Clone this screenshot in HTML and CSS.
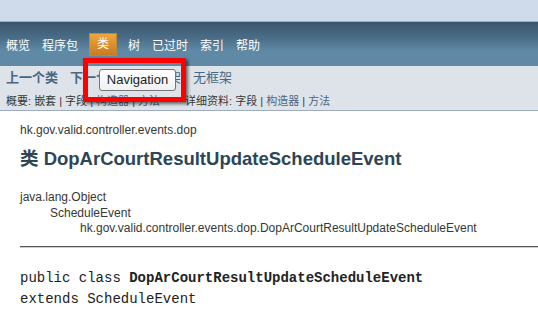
FILE: index.html
```html
<!DOCTYPE html>
<html lang="zh">
<head>
    <meta charset="UTF-8">
    <title>DopArCourtResultUpdateScheduleEvent</title>
    <link rel="stylesheet" href="styles.css">
</head>
<body>
    <div class="top-strip"></div>

    <div class="top-nav">
        <ul class="nav-list">
            <li>概览</li>
            <li>程序包</li>
            <li class="current">类</li>
            <li>树</li>
            <li>已过时</li>
            <li>索引</li>
            <li>帮助</li>
        </ul>
    </div>

    <div class="sub-nav">
        <div class="sub-row">
            <ul class="nav-list">
                <li>上一个类</li>
                <li>下一个类</li>
            </ul>
            <ul class="nav-list frames">
                <li>框架</li>
                <li>无框架</li>
            </ul>
        </div>
        <div class="sub-row small">
            <ul class="sub-list">
                <li>概要:&nbsp;</li>
                <li>嵌套&nbsp;|&nbsp;</li>
                <li>字段&nbsp;|&nbsp;</li>
                <li><a>构造器</a>&nbsp;|&nbsp;</li>
                <li><a>方法</a></li>
            </ul>
            <ul class="sub-list">
                <li>详细资料:&nbsp;</li>
                <li>字段&nbsp;|&nbsp;</li>
                <li><a>构造器</a>&nbsp;|&nbsp;</li>
                <li><a>方法</a></li>
            </ul>
        </div>

        <div class="highlight"></div>
        <div class="tooltip">Navigation</div>
    </div>

    <div class="content">
        <div class="package-name">hk.gov.valid.controller.events.dop</div>
        <h2 class="title">类 DopArCourtResultUpdateScheduleEvent</h2>

        <ul class="inheritance">
            <li>java.lang.Object</li>
            <li class="level-1">ScheduleEvent</li>
            <li class="level-2">hk.gov.valid.controller.events.dop.DopArCourtResultUpdateScheduleEvent</li>
        </ul>

        <hr>

        <pre class="signature">public class <b>DopArCourtResultUpdateScheduleEvent</b>
extends ScheduleEvent</pre>
    </div>
</body>
</html>
```

FILE: styles.css
```css
* {
    margin: 0;
    padding: 0;
    box-sizing: border-box;
}

body {
    background: #ffffff;
    color: #353833;
    font-family: "Liberation Sans", "Noto Sans CJK SC", sans-serif;
    font-size: 12px;
    overflow: hidden;
}

ul {
    list-style: none;
}

.top-strip {
    height: 22px;
    background: #cfdbeb;
    border-bottom: 1px solid #a3acb8;
}

.top-nav {
    height: 44px;
    background: linear-gradient(to bottom, #3a566d 0%, #4a6c86 35%, #5f89a5 65%, #5f89a5 100%);
    display: flex;
    align-items: center;
    color: #ffffff;
    font-size: 12px;
}

.nav-list {
    display: flex;
    align-items: center;
}

.nav-list li {
    padding: 0 6px;
}

.top-nav .current {
    margin: 0 5px;
    padding: 0 7px;
    height: 23px;
    line-height: 21px;
    background: linear-gradient(to bottom, #eea63c, #c97b22);
    border: 1px solid #b88a3a;
}

.sub-nav {
    position: relative;
    height: 45px;
    background: #dee3e9;
    border-bottom: 1px solid #9eadc0;
}

.sub-row {
    display: flex;
    height: 21px;
    align-items: center;
    color: #4a6782;
    font-size: 13px;
    font-weight: bold;
}

.sub-row .nav-list {
    margin-right: 21px;
}

.sub-row .frames {
    font-weight: normal;
}

.sub-row.small {
    margin-top: 2px;
    font-size: 11px;
    font-weight: normal;
    color: #353833;
}

.sub-list {
    display: flex;
    padding-left: 6px;
    margin-right: 19px;
}

.sub-list a {
    color: #4a6782;
}

.highlight {
    position: absolute;
    left: 83px;
    top: -8px;
    width: 103px;
    height: 44px;
    border: 5px solid #ff0000;
    box-shadow: 2px 2px 3px rgba(0, 0, 0, 0.55);
}

.tooltip {
    position: absolute;
    left: 99px;
    top: 3px;
    width: 77px;
    height: 22px;
    border: 1px solid #767676;
    border-radius: 3px;
    background: linear-gradient(to bottom, #ffffff, #eef0f3);
    color: #222222;
    font-size: 13px;
    line-height: 20px;
    text-align: center;
}

.content {
    padding: 12px 0 0 20px;
}

.package-name {
    line-height: 15px;
}

.title {
    margin-top: 10px;
    font-size: 18.5px;
    line-height: 22px;
    color: #2c4557;
}

.inheritance {
    margin-top: 20px;
    line-height: 15.5px;
}

.inheritance .level-1 {
    padding-left: 30px;
}

.inheritance .level-2 {
    padding-left: 60px;
}

hr {
    margin-top: 9px;
    border: none;
    border-top: 1px solid #555555;
    border-bottom: 1px solid #cccccc;
}

.signature {
    margin-top: 20px;
    font-family: "Liberation Mono", "Noto Sans CJK SC", monospace;
    font-size: 14px;
    line-height: 21px;
    color: #222222;
}
```
